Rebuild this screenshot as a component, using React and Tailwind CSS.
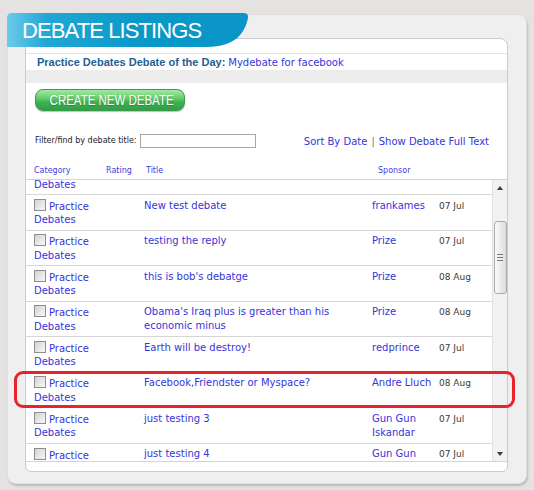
import React from 'react';

const rows = [
  { title: 'New test debate', sponsor: 'frankames', date: '07 Jul' },
  { title: 'testing the reply', sponsor: 'Prize', date: '07 Jul' },
  { title: "this is bob's debatge", sponsor: 'Prize', date: '08 Aug' },
  { title: "Obama's Iraq plus is greater than his economic minus", sponsor: 'Prize', date: '08 Aug' },
  { title: 'Earth will be destroy!', sponsor: 'redprince', date: '07 Jul' },
  { title: 'Facebook,Friendster or Myspace?', sponsor: 'Andre Lluch', date: '08 Aug' },
  { title: 'just testing 3', sponsor: 'Gun Gun Iskandar', date: '07 Jul' },
];

const Checkbox = () => (
  <span className="inline-block w-[12px] h-[12px] mr-[3px] align-[-1.5px] border border-[#8d8d8d] bg-[linear-gradient(135deg,#d2d2d2,#f8f8f8)]"></span>
);

const Row = ({ row }) => (
  <div className="h-[35.5px] flex border-b border-[#d6d6d6] pt-[3.5px] text-[10px] leading-[14px]">
    <div className="w-[118px] shrink-0 pl-[8px] pr-[20px] text-[#3434dc]">
      <Checkbox />
      Practice Debates
    </div>
    <div className="w-[228px] shrink-0 pr-[8px] text-[#3434dc]">{row.title}</div>
    <div className="w-[67px] shrink-0 pr-[3px] text-[#3434dc]">{row.sponsor}</div>
    <div className="w-[53px] shrink-0 text-[9px] leading-[14px] text-[#3a3a3a]">{row.date}</div>
  </div>
);

// row cut by the bottom of the scroll box: only its first line shows
const LastRow = () => (
  <div className="flex pt-[4.5px] text-[10px] leading-[12px] whitespace-nowrap">
    <div className="w-[118px] shrink-0 pl-[8px] text-[#3434dc]">
      <Checkbox />
      Practice
    </div>
    <div className="w-[228px] shrink-0 text-[#3434dc]">just testing 4</div>
    <div className="w-[67px] shrink-0 text-[#3434dc]">Gun Gun</div>
    <div className="w-[53px] shrink-0 text-[9px] text-[#3a3a3a]">07 Jul</div>
  </div>
);

export default function App() {
  return (
    <div className="relative w-[534px] h-[490px] overflow-hidden bg-[#e4e3e1] pt-[14px] pl-[7px] font-['DejaVu_Sans',sans-serif]">
      <div className="relative w-[520px] h-[470px] rounded-[9px] bg-[#f0efef] border border-[#e2e1e0] shadow-[1px_2px_2px_rgba(0,0,0,0.18)] pt-[23px] pl-[17px] pr-[18px]">
        {/* tab */}
        <div className="absolute left-[-1px] top-[-2px] w-[242px] h-[34px] z-10 bg-[linear-gradient(90deg,#6ccaea_0%,#22a7d5_16%,#0a98c8_55%,#0996c6_100%)] [clip-path:path('M0,5_Q0,0_5,0_L236,0_Q242,0_241,5_C238,20_228,34_200,34_L0,34_Z')] pl-[15px] pt-[2px]">
          <span className="block text-[22px] leading-[32px] text-white tracking-[-0.9px] font-['Liberation_Sans',Arial,sans-serif]">DEBATE LISTINGS</span>
        </div>

        {/* inner white panel */}
        <div className="h-[434px] bg-white border border-[#cbcbcb] rounded-tr-[8px] rounded-b-[6px] flex flex-col">
          <div className="h-[15px] shrink-0 border-b border-[#e3e3e3]"></div>
          <div className="h-[16px] shrink-0 flex items-center pl-[11px] whitespace-nowrap">
            <span className="text-[11px] font-bold text-[#245f92] font-['Liberation_Sans',Arial,sans-serif]">Practice Debates Debate of the Day:</span>
            <span className="ml-[3px] text-[10px] text-[#3434dc]">Mydebate for facebook</span>
          </div>
          <div className="h-[13px] shrink-0 bg-[#ececec]"></div>

          <div className="pl-[9px] pt-[6px] shrink-0">
            <button className="block w-[150px] h-[22px] rounded-[8px] border border-[#3b9a4c] bg-[linear-gradient(180deg,#a2e8a2_0%,#66cf70_40%,#3eb253_60%,#2f9f46_100%)] shadow-[0_1px_1px_rgba(0,0,0,0.25)] text-white text-[14px] leading-[20px] font-['Liberation_Sans',Arial,sans-serif] [text-shadow:0_1px_1px_rgba(0,80,0,0.35)] whitespace-nowrap overflow-hidden">
              <span className="inline-block scale-x-[0.82] origin-center">CREATE NEW DEBATE</span>
            </button>
          </div>

          <div className="mt-[23px] h-[14px] shrink-0 flex items-center pl-[9px] pr-[18px]">
            <span className="w-[105px] shrink-0 text-[8px] text-[#222] whitespace-nowrap">Filter/find by debate title:</span>
            <input className="w-[116px] h-[14px] border border-[#a6a6a6] bg-white outline-none" />
            <div className="ml-auto text-[10px] text-[#3434dc] whitespace-nowrap">
              <span>Sort By Date</span>
              <span className="mx-[4px] text-[#9a6a5a]">|</span>
              <span>Show Debate Full Text</span>
            </div>
          </div>

          <div className="mt-[14px] h-[17px] shrink-0 flex items-center text-[8px] text-[#3e3ed8] whitespace-nowrap">
            <div className="w-[80px] pl-[8px]">Category</div>
            <div className="w-[40px]">Rating</div>
            <div className="w-[232px]">Title</div>
            <div>Sponsor</div>
          </div>

          <div className="h-[283px] shrink-0 border-y border-[#d4d4d4] flex">
            <div className="flex-1 overflow-hidden">
              {/* tail of the row scrolled above */}
              <div className="h-[15px] border-b border-[#d6d6d6] pl-[8px] text-[10px] leading-[10px] text-[#3434dc]">Debates</div>
              {rows.map((r, i) => (
                <Row key={i} row={r} />
              ))}
              <LastRow />
            </div>
            <div className="w-[15px] shrink-0 bg-[#f1f1f1] border-l border-[#e3e3e3] flex flex-col items-center">
              <div className="h-[15px] flex items-center justify-center">
                <div className="w-0 h-0 border-x-[3.5px] border-x-transparent border-b-[4px] border-b-[#3a3a3a]"></div>
              </div>
              <div className="mt-[26px] w-[13px] h-[73px] rounded-[3px] border border-[#a9a9a9] bg-[linear-gradient(90deg,#fbfbfb,#dcdcdc)] flex flex-col items-center justify-center gap-[2px]">
                <div className="w-[6px] h-px bg-[#7a7a7a]"></div>
                <div className="w-[6px] h-px bg-[#7a7a7a]"></div>
                <div className="w-[6px] h-px bg-[#7a7a7a]"></div>
              </div>
              <div className="flex-1"></div>
              <div className="h-[15px] flex items-center justify-center">
                <div className="w-0 h-0 border-x-[3.5px] border-x-transparent border-t-[4px] border-t-[#3a3a3a]"></div>
              </div>
            </div>
          </div>
        </div>
      </div>

      {/* red highlight annotation */}
      <div className="absolute left-[14px] top-[371px] w-[501px] h-[37px] border-[3px] border-[#e8232b] rounded-[9px] pointer-events-none"></div>
    </div>
  );
}
